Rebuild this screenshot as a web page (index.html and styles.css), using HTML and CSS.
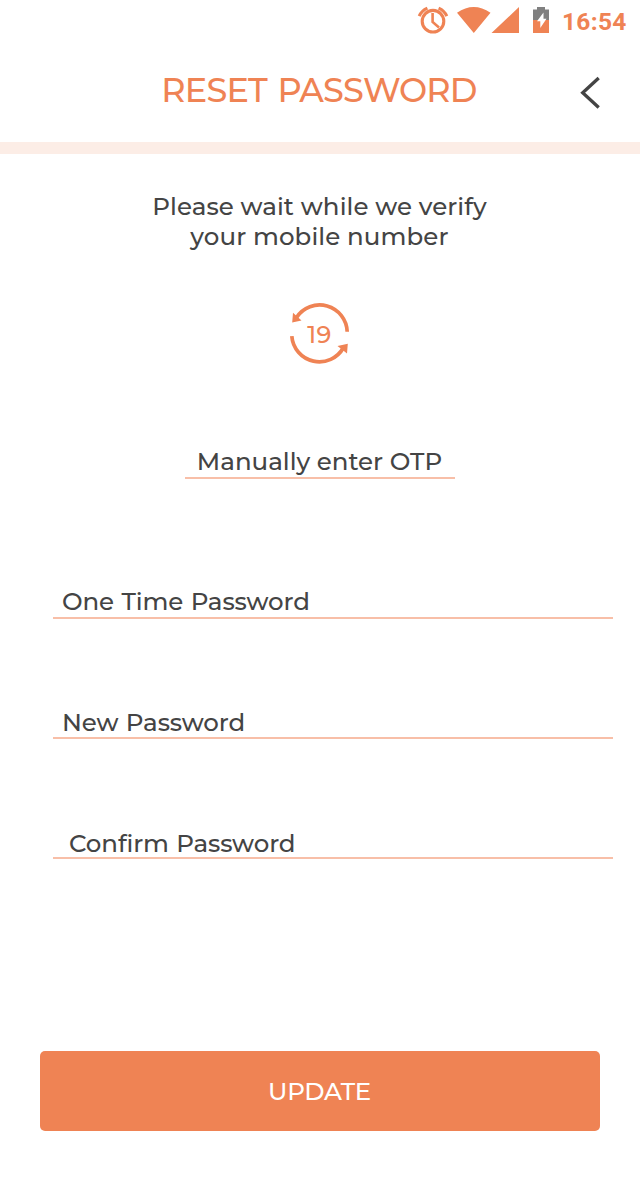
FILE: index.html
```html
<!DOCTYPE html>
<html lang="en">
<head>
<meta charset="utf-8">
<title>Reset Password</title>
<link rel="stylesheet" href="styles.css">
</head>
<body>
<div class="screen">
  <div class="status-bar">
    <svg class="status-icons" width="136" height="40" viewBox="416 0 136 40">
      <g fill="none" stroke="#ef8354">
        <circle cx="433" cy="21.2" r="10.8" stroke-width="3.1"/>
        <path d="M432.600 13V22L439 27.500" stroke-width="2.6"/>
        <path d="M419.200 16.200Q421.500 10.800 427.400 8.200M446.800 16.200Q444.500 10.800 438.600 8.200" stroke-width="3.1"/>
      </g>
      <path d="M457 12.800Q473.700 1 490.500 12.800L473.800 33ZM491.500 33L519 7V33Z" fill="#ef8354"/>
      <path d="M533 9.500H537V7H545V9.500H549V20H533Z" fill="#808080"/>
      <path d="M533 20H549V33H533Z" fill="#ef8354"/>
      <path d="M543.500 12.500L537 21.300H540.300V28L546.500 18.800H543.500Z" fill="#fff"/>
    </svg>
    <span class="clock">16:54</span>
  </div>
  <header class="header">
    <h1 class="title">RESET PASSWORD</h1>
    <svg class="back" width="26" height="36" viewBox="578 74 26 36"><path d="M598.700 78L582.700 92.800L598.700 107.500" fill="none" stroke="#444" stroke-width="3.3"/></svg>
  </header>
  <main class="content">
    <p class="message">Please wait while we verify<br>your mobile number</p>
    <svg class="timer" width="64" height="64" viewBox="288 302 64 64">
      <g fill="none" stroke="#ef8354" stroke-width="3.700">
        <path d="M296.500 317.500A27.600 27.600 0 0 1 347.200 331.800"/>
        <path d="M291.800 336.200A27.600 27.600 0 0 0 343.500 347.500"/>
      </g>
      <path d="M293 312.800L292.200 322.500L301.500 320.500ZM337.500 346L347.800 343.800L347 353.500Z" fill="#ef8354"/>
      <text class="count" x="319.600" y="343" text-anchor="middle">19</text>
    </svg>
    <a class="manual">Manually enter OTP</a>
    <form class="form">
      <div class="field">One Time Password</div>
      <div class="field">New Password</div>
      <div class="field">Confirm Password</div>
      <button class="update" type="button">UPDATE</button>
    </form>
  </main>
</div>
</body>
</html>
```
FILE: styles.css
```css
* { box-sizing: border-box; }
body { margin: 0; background: #fff; }
.screen {
  width: 640px;
  height: 1178px;
  overflow: hidden;
  color: #444;
  font: 500 24.500px/30px Montserrat, Inter, sans-serif;
}
.status-bar { display: flex; justify-content: flex-end; height: 40px; padding-right: 13px; }
.status-icons { flex: none; margin-right: 10px; }
.clock {
  width: 65px;
  color: #ef8354;
  font: 700 24.500px/43px Roboto, sans-serif;
  letter-spacing: 0.300px;
}
.header {
  display: grid;
  grid-template-columns: 100px 1fr 100px;
  height: 114px;
  border-bottom: 12px solid #fcede6;
}
.title {
  grid-column: 2;
  margin: 0;
  padding-right: 2px;
  color: #ef8354;
  font-size: 33.500px;
  font-weight: 500;
  line-height: 100px;
  letter-spacing: -0.850px;
  word-spacing: 2.500px;
  text-align: center;
  white-space: nowrap;
}
.back { margin: 34px 0 0 38px; }
.content { display: flex; flex-direction: column; align-items: center; }
.message {
  margin: 37px 0 0;
  padding-right: 1px;
  letter-spacing: 0.100px;
  text-align: center;
  white-space: nowrap;
}
.timer { margin-top: 51px; }
.count { font-size: 24px; font-weight: 500; fill: #ef8354; letter-spacing: 0.500px; }
.manual {
  width: 270px;
  height: 33px;
  margin-top: 80px;
  padding-right: 1px;
  border-bottom: 2px solid #f8bfa8;
  text-align: center;
  white-space: nowrap;
}
.form { display: flex; flex-direction: column; width: 560px; margin-top: 107px; }
.field {
  height: 33px;
  margin: 0 -13px 87px 13px;
  padding-left: 9px;
  border-bottom: 2px solid #f8bfa8;
  letter-spacing: -0.100px;
  word-spacing: 1px;
}
.field:nth-child(2) { padding-top: 1px; }
.field:nth-child(3) { padding: 2px 0 0 16px; }
.update {
  height: 80px;
  margin-top: 105px;
  padding: 0 1px 0 0;
  border: 0;
  border-radius: 5px;
  background: #ef8354;
  color: #fff;
  font: inherit;
  letter-spacing: -0.300px;
}
```
